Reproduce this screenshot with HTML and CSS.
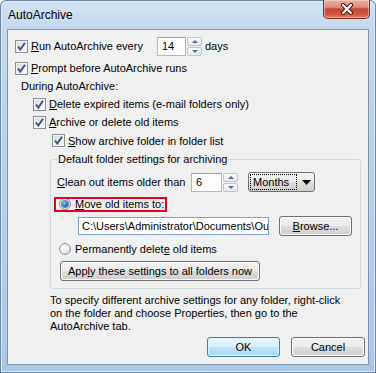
FILE: index.html
```html
<!DOCTYPE html>
<html>
<head>
<meta charset="utf-8">
<link rel="stylesheet" href="styles.css">
</head>
<body>
<div class="window">
  <div class="titlebar">
    <div class="title">AutoArchive</div>
    <div class="close"><svg width="14" height="12" viewBox="0 0 14 12"><path d="M3 2 L11 10 M11 2 L3 10" stroke="#4a1a12" stroke-width="4.2" stroke-linecap="round" fill="none"/><path d="M3 2 L11 10 M11 2 L3 10" stroke="#ffffff" stroke-width="2.2" stroke-linecap="round" fill="none"/></svg></div>
  </div>
  <div class="client">
    <div class="row r1">
      <span class="cb"><svg width="11" height="11" viewBox="0 0 11 11"><path d="M2 5.5 L4.3 8.5 L9 1.8" class="tick"/></svg></span>
      <span class="lab1"><u>R</u>un AutoArchive every</span>
      <span class="field f14">14</span>
      <span class="spin"><span class="sb"><i class="up"></i></span><span class="sb"><i class="dn"></i></span></span>
      <span class="days">days</span>
    </div>
    <div class="row r2">
      <span class="cb"><svg width="11" height="11" viewBox="0 0 11 11"><path d="M2 5.5 L4.3 8.5 L9 1.8" class="tick"/></svg></span>
      <span><u>P</u>rompt before AutoArchive runs</span>
    </div>
    <div class="row during">During AutoArchive:</div>
    <div class="row ind1">
      <span class="cb"><svg width="11" height="11" viewBox="0 0 11 11"><path d="M2 5.5 L4.3 8.5 L9 1.8" class="tick"/></svg></span>
      <span><u>D</u>elete expired items (e-mail folders only)</span>
    </div>
    <div class="row ind1">
      <span class="cb"><svg width="11" height="11" viewBox="0 0 11 11"><path d="M2 5.5 L4.3 8.5 L9 1.8" class="tick"/></svg></span>
      <span><u>A</u>rchive or delete old items</span>
    </div>
    <div class="row ind2">
      <span class="cb"><svg width="11" height="11" viewBox="0 0 11 11"><path d="M2 5.5 L4.3 8.5 L9 1.8" class="tick"/></svg></span>
      <span><u>S</u>how archive folder in folder list</span>
    </div>
    <fieldset class="group">
      <legend>Default folder settings for archiving</legend>
      <div class="row clean">
        <span class="lab2"><u>C</u>lean out items older than</span>
        <span class="field f6">6</span>
        <span class="spin"><span class="sb"><i class="up"></i></span><span class="sb"><i class="dn"></i></span></span>
        <span class="combo"><span class="focus">Months</span><svg width="9" height="5" viewBox="0 0 9 5"><path d="M0 0 H9 L4.5 5 Z" fill="#000"/></svg></span>
      </div>
      <div class="row move">
        <span class="mark">
          <span class="rd"><span class="dot"></span></span>
          <span><u>M</u>ove old items to:</span>
        </span>
      </div>
      <div class="row path">
        <span class="field fpath">C:\Users\Administrator\Documents\Ou</span>
        <span class="btn browse"><span><u>B</u>rowse...</span></span>
      </div>
      <div class="row perm">
        <span class="rd"></span>
        <span>Permanently delet<u>e</u> old items</span>
      </div>
      <div class="row apply">
        <span class="btn applybtn"><span>App<u>l</u>y these settings to all folders now</span></span>
      </div>
    </fieldset>
    <p class="note">To specify different archive settings for any folder, right-click<br>on the folder and choose Properties, then go to the<br>AutoArchive tab.</p>
    <div class="buttons">
      <span class="btn ok">OK</span>
      <span class="btn cancel">Cancel</span>
    </div>
  </div>
</div>
</body>
</html>
```
FILE: styles.css
```css
* { box-sizing: border-box; }
html, body { margin: 0; padding: 0; background: #ffffff; }
body {
  font-family: "Liberation Sans", Arial, sans-serif;
  font-size: 11px;
  color: #000;
}
u { text-decoration: underline; text-underline-offset: 1px; }

.window {
  width: 376px;
  height: 373px;
  padding: 0 7px 8px 7px;
  display: flex;
  flex-direction: column;
  border-radius: 6px 6px 0 0;
  background: linear-gradient(180deg, #d3e3f3 0%, #c3d8ee 8%, #b9d2ec 40%, #b0cceb 75%, #a9c7e8 100%);
  box-shadow: inset 0 0 0 1px #7088a8, inset 0 0 0 2px #dbe8f5;
}
.titlebar {
  height: 29px;
  flex: none;
  display: flex;
  justify-content: space-between;
  align-items: flex-start;
}
.title {
  font-size: 12px;
  line-height: 16px;
  padding: 7px 0 0 1px;
}
.close {
  width: 47px;
  height: 19px;
  margin-right: -1px;
  border: 1px solid #7a2a1e;
  border-top: none;
  border-radius: 0 0 5px 5px;
  background: linear-gradient(180deg, #eab0a2 0%, #dd8d7a 40%, #c7452f 50%, #cc5a40 80%, #e3836a 100%);
  box-shadow: inset 0 0 0 1px rgba(255,220,210,0.5);
  display: flex;
  align-items: center;
  justify-content: center;
}

.client {
  flex: 1;
  border: 1px solid #8294ad;
  background: #f0f0f0;
  padding: 6px 5px 0 7px;
  display: flex;
  flex-direction: column;
}
.row {
  display: flex;
  align-items: center;
  height: 18px;
  flex: none;
  white-space: nowrap;
}
.cb {
  width: 13px;
  height: 13px;
  flex: none;
  margin-right: 3px;
  border: 1px solid #8e8f8f;
  background: linear-gradient(135deg, #d6d6d6 0%, #f0f0f0 60%, #fdfdfd 100%);
  box-shadow: inset 0 0 0 1px #f6f6f6;
  display: flex;
  align-items: center;
  justify-content: center;
}
.tick { fill: none; stroke: #3b5694; stroke-width: 2; stroke-linejoin: miter; }

.r1 { height: 20px; }
.r2 { margin-top: 3px; }
.lab1 { width: 126px; }
.field {
  height: 19px;
  background: #fff;
  border: 1px solid #a6b8d2;
  border-top-color: #8ea4c3;
  padding-left: 4px;
  line-height: 17px;
  overflow: hidden;
  white-space: nowrap;
  flex: none;
}
.f14 { width: 29px; }
.spin {
  display: flex;
  flex-direction: column;
  gap: 1px;
  margin-left: 1px;
  width: 15px;
  height: 19px;
  flex: none;
}
.sb {
  flex: 1;
  border: 1px solid #b9c5d6;
  border-radius: 2px;
  background: linear-gradient(180deg, #fafbfd, #e4e9f0);
  display: flex;
  align-items: center;
  justify-content: center;
}
.sb i { width: 0; height: 0; border-left: 3px solid transparent; border-right: 3px solid transparent; }
.sb .up { border-bottom: 3px solid #4d6a99; }
.sb .dn { border-top: 3px solid #4d6a99; }
.days { margin-left: 3px; }
.during { padding-left: 6px; }
.ind1 { margin-left: 18px; }
.ind2 { margin-left: 37px; height: 19px; }

.group {
  margin: 1px 0 0 35px;
  width: 311px;
  border: 1px solid #d0d9e0;
  border-radius: 3px;
  padding: 5px 5px 7px 6px;
  min-width: 0;
}
.group legend {
  padding: 0 1px;
  line-height: 16px;
}
.clean { height: 20px; }
.lab2 { width: 134px; }
.f6 { width: 31px; }
.combo {
  margin-left: 10px;
  width: 67px;
  height: 20px;
  border: 1px solid #707070;
  border-radius: 3px;
  background: linear-gradient(180deg, #f2f2f2 0%, #ebebeb 49%, #dddddd 50%, #cfcfcf 100%);
  display: flex;
  align-items: center;
  padding: 1px;
  flex: none;
}
.combo .focus {
  outline: 1px dotted #000;
  outline-offset: -1px;
  height: 16px;
  width: 47px;
  line-height: 16px;
  padding-left: 3px;
  background: linear-gradient(180deg, #f2f2f2 0%, #ebebeb 49%, #dddddd 50%, #cfcfcf 100%);
}
.combo svg { margin-left: 5px; }

.move { margin-top: 3px; }
.mark {
  display: flex;
  align-items: center;
  height: 11px;
  margin-left: -1px;
  padding: 0 1px 0 3px;
  outline: 2px solid #e8001c;
  gap: 4px;
}
.rd {
  width: 12px;
  height: 12px;
  flex: none;
  border-radius: 50%;
  border: 1px solid #8e8f8f;
  background: radial-gradient(circle at 35% 35%, #ffffff 0%, #ececec 50%, #d4d4d4 100%);
  display: flex;
  align-items: center;
  justify-content: center;
}
.rd .dot {
  width: 6px;
  height: 6px;
  border-radius: 50%;
  background: radial-gradient(circle at 40% 35%, #a8dcff 0%, #2b78c4 45%, #0d3b73 100%);
  box-shadow: 0 0 0 1px #5b8fc4;
}
.path { margin-top: 3px; height: 20px; }
.fpath { margin-left: 21px; width: 191px; height: 18px; line-height: 16px; padding-left: 3px; border-color: #7f9fcc; }
.btn {
  height: 20px;
  border: 1px solid #707070;
  border-radius: 3px;
  background: linear-gradient(180deg, #f2f2f2 0%, #ebebeb 49%, #dddddd 50%, #cfcfcf 100%);
  box-shadow: inset 0 0 0 1px #fbfbfb;
  display: flex;
  align-items: center;
  justify-content: center;
  flex: none;
}
.browse { margin-left: 10px; width: 73px; }
.perm { margin-top: 4px; }
.perm .rd { margin-left: 2px; margin-right: 4px; }
.apply { margin-top: 3px; height: 20px; }
.applybtn { margin-left: 3px; width: 200px; }

.note {
  margin: 5px 0 0 35px;
  line-height: 13px;
  white-space: nowrap;
}
.buttons {
  margin-top: 4px;
  margin-right: -2px;
  display: flex;
  justify-content: flex-end;
  gap: 11px;
}
.ok {
  width: 73px;
  border-color: #3c7fb1;
  background: linear-gradient(180deg, #eaf6fd 0%, #d9f0fc 49%, #bee6fd 50%, #a7d9f5 100%);
  box-shadow: inset 0 0 0 1px #dff2fc;
}
.cancel { width: 74px; }
```
